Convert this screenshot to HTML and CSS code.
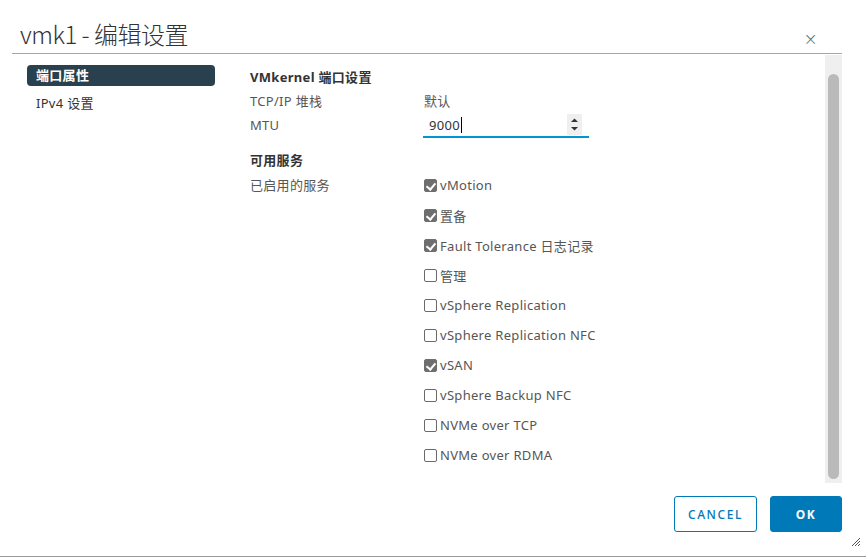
FILE: index.html
```html
<!DOCTYPE html>
<html lang="zh">
<head>
<meta charset="utf-8">
<title>vmk1 - 编辑设置</title>
<link rel="stylesheet" href="styles.css">
</head>
<body>
<div class="dialog">
  <div class="header">
    <h1 class="title">vmk1 - 编辑设置</h1>
    <span class="close">×</span>
  </div>
  <div class="main">
    <nav class="nav">
      <div class="nav-item active">端口属性</div>
      <div class="nav-item">IPv4 设置</div>
    </nav>
    <div class="content">
      <div class="row heading">VMkernel 端口设置</div>
      <div class="row">
        <span class="label">TCP/IP 堆栈</span>
        <span class="value">默认</span>
      </div>
      <div class="row mtu-row">
        <span class="label">MTU</span>
        <div class="input">
          <span class="input-text">9000</span><span class="caret"></span>
          <div class="spinner">
            <svg width="15" height="21" viewBox="0 0 15 21"><path d="M4 8 L7.5 4.5 L11 8 Z" fill="#333"/><path d="M4 13 L11 13 L7.5 16.5 Z" fill="#333"/></svg>
          </div>
        </div>
      </div>
      <div class="row heading services-heading">可用服务</div>
      <div class="services">
        <span class="label services-label">已启用的服务</span>
        <ul class="checks">
          <li><span class="cb checked"></span>vMotion</li>
          <li><span class="cb checked"></span>置备</li>
          <li><span class="cb checked"></span>Fault Tolerance 日志记录</li>
          <li><span class="cb"></span>管理</li>
          <li><span class="cb"></span>vSphere Replication</li>
          <li><span class="cb"></span>vSphere Replication NFC</li>
          <li><span class="cb checked"></span>vSAN</li>
          <li><span class="cb"></span>vSphere Backup NFC</li>
          <li><span class="cb"></span>NVMe over TCP</li>
          <li><span class="cb"></span>NVMe over RDMA</li>
        </ul>
      </div>
    </div>
    <div class="scrolltrack"><div class="thumb"></div></div>
  </div>
  <div class="footer">
    <button class="btn btn-outline">CANCEL</button>
    <button class="btn btn-primary">OK</button>
  </div>
  <svg class="grip" width="10" height="10" viewBox="0 0 10 10"><path d="M9 1 L1 9 M9 4 L4 9 M9 7 L7 9" stroke="#555" stroke-width="1"/></svg>
</div>
</body>
</html>
```
FILE: styles.css
```css
* { box-sizing: border-box; }
html, body { margin: 0; padding: 0; background: #fff; }
body {
  font-family: "Noto Sans", "Noto Sans CJK SC", sans-serif;
  font-size: 13px;
  letter-spacing: 0.3px;
  color: #565656;
}
.dialog {
  position: relative;
  width: 866px;
  height: 557px;
  border-bottom: 1px solid #9a9a9a;
  display: flex;
  flex-direction: column;
}
.header {
  height: 54px;
  margin: 0 24px 0 12px;
  padding: 0 24px 0 8px;
  border-bottom: 1px solid #a6a6a6;
  display: flex;
  align-items: flex-end;
  justify-content: space-between;
}
.title {
  margin: 0 0 3px 0;
  font-family: "Noto Sans CJK SC", "Noto Sans", sans-serif;
  font-weight: 300;
  font-size: 24px;
  line-height: 32px;
  color: #333;
  letter-spacing: -0.5px;
}
.close {
  font-family: "DejaVu Sans", sans-serif;
  font-weight: 200;
  font-size: 17px;
  color: #666;
  margin-bottom: 4px;
}
.main {
  display: flex;
  height: 429px;
}
.nav {
  width: 188px;
  margin-left: 27px;
  padding-top: 11px;
  display: flex;
  flex-direction: column;
  gap: 7px;
}
.nav-item {
  height: 21px;
  line-height: 21px;
  padding-left: 9px;
  border-radius: 4px;
  color: #333;
  font-size: 13px;
}
.nav-item.active {
  background: #29414e;
  color: #fff;
  font-weight: 700;
}
.content {
  flex: 1;
  margin-left: 35px;
  padding-top: 10px;
}
.row {
  display: flex;
  align-items: center;
  height: 24px;
}
.heading {
  font-weight: 700;
  color: #333;
}
.label { width: 174px; flex: none; }
.value { color: #565656; }
.mtu-row { height: 26px; }
.input {
  position: relative;
  width: 166px;
  height: 24px;
  margin-left: -1px;
  margin-top: 2px;
  border-bottom: 2px solid #0095d3;
  display: flex;
  align-items: center;
  padding-left: 6px;
  color: #333;
}
.caret {
  width: 1px;
  height: 16px;
  background: #000;
  margin-left: 1px;
}
.spinner {
  position: absolute;
  left: 144px;
  top: 0;
  width: 15px;
  height: 21px;
  background: #efefef;
}
.spinner svg { display: block; }
.services-heading { margin-top: 10px; height: 22px; }
.services { display: flex; }
.services-label { height: 30px; line-height: 30px; }
.checks {
  list-style: none;
  margin: 0;
  padding: 0;
}
.checks li {
  height: 30px;
  display: flex;
  align-items: center;
  color: #565656;
}
.cb {
  width: 13px;
  height: 13px;
  border: 1px solid #6a6a6a;
  border-radius: 2px;
  margin-right: 3px;
  position: relative;
  flex: none;
}
.cb.checked {
  background: #6e6e6e;
  border-color: #6e6e6e;
}
.cb.checked::after {
  content: "";
  position: absolute;
  left: 3px;
  top: 1px;
  width: 4px;
  height: 7px;
  border-right: 2px solid #fff;
  border-bottom: 2px solid #fff;
  transform: rotate(40deg);
}
.scrolltrack {
  width: 17px;
  margin: 1px 24px 0 0;
  background: #efefef;
  padding: 19px 3px 4px 3px;
  height: 428px;
}
.thumb {
  height: 100%;
  width: 11px;
  background: #bababa;
  border-radius: 6px;
}
.footer {
  display: flex;
  justify-content: flex-end;
  gap: 13px;
  padding: 13px 24px 0 0;
}
.btn {
  height: 36px;
  border-radius: 3px;
  font-family: "Noto Sans", sans-serif;
  font-size: 12px;
  letter-spacing: 1.6px;
  cursor: pointer;
}
.btn-outline {
  width: 83px;
  background: #fff;
  border: 1px solid #0079b8;
  color: #0079b8;
  font-weight: 500;
}
.btn-primary {
  width: 72px;
  background: #0079b8;
  border: 1px solid #0079b8;
  color: #fff;
  font-weight: 700;
}
.grip {
  position: absolute;
  right: 5px;
  bottom: 9px;
}
```
